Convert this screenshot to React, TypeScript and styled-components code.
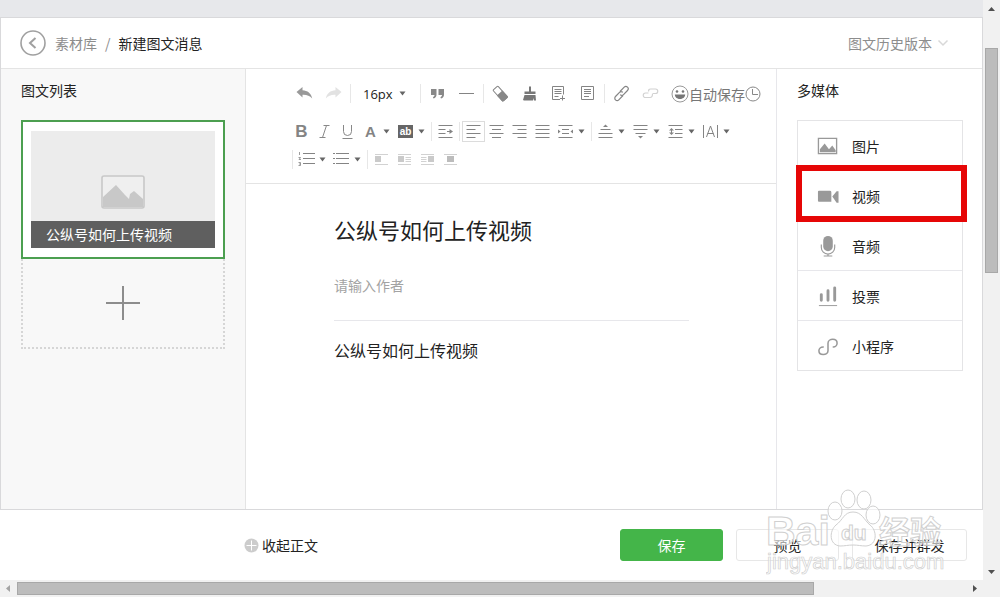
import React from "react";
import styled, { createGlobalStyle, css } from "styled-components";

const GlobalStyle = createGlobalStyle`
  *, *::before, *::after { box-sizing: border-box; }
  body {
    margin: 0;
    background: #fff;
    color: #222;
    font: 14px/20px "Noto Sans CJK SC", "Liberation Sans", sans-serif;
  }
  button, input, select, textarea { font: inherit; color: inherit; }
  button { padding: 0; border: 0; background: none; cursor: pointer; }
  h1, h2, p, ul { margin: 0; padding: 0; font-weight: 400; font-size: inherit; }
  ul { list-style: none; }
  svg { display: block; flex: none; }
`;

const Window = styled.div`
  display: grid;
  grid-template-columns: minmax(0, 1fr) 17px;
  grid-template-rows: minmax(0, 1fr) 17px;
  height: 100vh;
  background: #f1f1f1;
`;

const Page = styled.div`
  display: flex;
  flex-direction: column;
  background: #fff;
  overflow: hidden;
`;

const TopStrip = styled.div`
  flex: none;
  height: 17px;
  background: #e7e8eb;
`;

const Frame = styled.div`
  flex: 1;
  min-height: 0;
  display: flex;
  flex-direction: column;
  border: 1px solid #d9d9db;
`;

const Header = styled.header`
  flex: none;
  display: flex;
  align-items: center;
  height: 51px;
  padding: 0 33px 0 19px;
  border-bottom: 1px solid #e4e4e4;
`;

const BackButton = styled.button`
  margin-right: 9px;
`;

const Crumbs = styled.nav`
  display: flex;
  align-items: center;
  gap: 8px;
  color: #8d8d8d;
`;

const CrumbLink = styled.a`
  color: #8d8d8d;
  text-decoration: none;
`;

const PageTitle = styled.h1`
  color: #222;
`;

const HistoryButton = styled.button`
  display: flex;
  align-items: center;
  gap: 5px;
  margin-left: auto;
  color: #8d8d8d;
`;

const Columns = styled.main`
  flex: 1;
  min-height: 0;
  display: grid;
  grid-template-columns: 245px minmax(0, 1fr) 206px;
`;

const Side = styled.aside<{ $left?: boolean }>`
  padding: 11px 20px 0;
  ${(p) =>
    p.$left
      ? css`
          background: #f8f8f8;
          border-right: 1px solid #e4e4e4;
        `
      : css`
          padding-right: 19px;
          border-left: 1px solid #e7e7eb;
        `}
`;

const SideTitle = styled.h2`
  margin-bottom: 20px;
`;

const Card = styled.button`
  display: block;
  width: 100%;
  padding: 9px 8px;
  border: 2px solid #4c9f50;
  background: #fff;
`;

const Cover = styled.span`
  display: flex;
  flex-direction: column;
  align-items: center;
  justify-content: flex-end;
  gap: 12px;
  height: 117px;
  background: #ececec;
`;

const Caption = styled.span`
  width: 100%;
  padding: 0 15px;
  background: #5f5f5f;
  color: #fff;
  line-height: 27px;
  text-align: left;
`;

const AddButton = styled.button`
  display: flex;
  align-items: center;
  justify-content: center;
  width: 100%;
  height: 90px;
  border: 2px dotted #d6d6d6;
  border-top: 0;
`;

const Editor = styled.section`
  min-width: 0;
`;

const Toolbar = styled.div`
  padding: 11px 0 10px 44px;
  border-bottom: 1px solid #e4e4e4;
  color: #777;
`;

const ToolRow = styled.div<{ $spaced?: boolean }>`
  display: flex;
  align-items: center;
  height: 27px;
  margin-bottom: ${(p) => (p.$spaced ? 11 : 0)}px;
  & + &:last-child { margin-top: 1px; }
`;

const Tool = styled.button<{ $wide?: boolean; $active?: boolean }>`
  display: flex;
  flex: none;
  align-items: center;
  justify-content: center;
  width: ${(p) => (p.$wide ? 29 : 23)}px;
  height: 21px;
  color: #848484;
  ${(p) => p.$active && css`outline: 1px solid #dcdcdc; outline-offset: -1px;`}
`;

const DropTool = styled.button`
  display: flex;
  flex: none;
  align-items: center;
  gap: 4px;
  width: 35px;
  height: 21px;
  padding-left: 3px;
  color: #848484;
`;

const Divider = styled.span`
  flex: none;
  width: 1px;
  height: 19px;
  margin: 0 2px;
  background: #e7e7e7;
`;

const SizePicker = styled.label`
  display: grid;
  grid-template-columns: 1fr auto;
  align-items: center;
  width: 65px;
  padding: 0 12px 0 10px;
  color: #222;
`;

const SizeSelect = styled.select`
  appearance: none;
  width: 100%;
  padding: 0;
  border: 0;
  background: none;
  font: 13px/20px "Open Sans", sans-serif;
`;

const EmojiTool = styled.button`
  width: 24px;
  padding-left: 6px;
  color: #777;
`;

const SaveState = styled.span`
  display: flex;
  align-items: center;
  flex: none;
  color: #777;
`;

const Article = styled.div`
  display: flex;
  flex-direction: column;
  padding: 29px 87px 0 88px;
`;

const TitleInput = styled.input`
  width: 100%;
  height: 32px;
  padding: 0;
  border: 0;
  outline: 0;
  background: none;
  font-size: 22px;
`;

const AuthorInput = styled.input`
  width: 100%;
  height: 68px;
  margin: 6px 0 1px;
  padding: 0;
  border: 0;
  outline: 0;
  background: none;
  &::placeholder { color: #a3a3a3; opacity: 1; }
`;

const ContentArea = styled.textarea`
  width: 100%;
  height: 120px;
  padding: 17px 0 0;
  border: 0;
  border-top: 1px solid #e7e7eb;
  outline: 0;
  resize: none;
  background: none;
  font-size: 16px;
  line-height: 24px;
`;

const MediaList = styled.ul`
  border: 1px solid #e4e4e6;
`;

const MediaItem = styled.li<{ $marked?: boolean }>`
  position: relative;
  height: 50px;
  &:first-child { height: 49px; }
  & + & { border-top: 1px solid #e7e7eb; }
  ${(p) =>
    p.$marked &&
    css`
      z-index: 1;
      &::after {
        content: "";
        position: absolute;
        inset: -6px -5px -2px -2px;
        border: 6px solid #e60606;
        pointer-events: none;
      }
    `}
`;

const MediaButton = styled.button`
  display: flex;
  align-items: center;
  gap: 13px;
  width: 100%;
  height: 100%;
  padding-left: 19px;
  text-align: left;
`;

const Footer = styled.footer`
  position: relative;
  flex: none;
  display: flex;
  align-items: center;
  gap: 13px;
  height: 70px;
  padding: 0 16px 0 244px;
`;

const CollapseButton = styled.button`
  display: flex;
  align-items: center;
  gap: 3px;
  margin-right: auto;
`;

const Action = styled.button<{ $primary?: boolean; $long?: boolean }>`
  width: ${(p) => (p.$long ? 115 : 103)}px;
  height: 32px;
  border: 1px solid ${(p) => (p.$primary ? "#44b549" : "#e7e7e7")};
  border-radius: 3px;
  background: ${(p) => (p.$primary ? "#44b549" : "#fff")};
  color: ${(p) => (p.$primary ? "#fff" : "#222")};
`;

const Watermark = styled.svg`
  position: absolute;
  right: 33px;
  bottom: 0;
  pointer-events: none;
`;

const Scrollbar = styled.div<{ $horizontal?: boolean }>`
  display: flex;
  flex-direction: ${(p) => (p.$horizontal ? "row" : "column")};
  justify-content: space-between;
  align-items: center;
  background: #f1f1f1;
`;

const Track = styled.div<{ $horizontal?: boolean }>`
  flex: 1;
  display: grid;
  ${(p) =>
    p.$horizontal
      ? css`
          grid-template-columns: 84fr 16fr;
          height: 13px;
        `
      : css`
          grid-template-rows: 31fr 225fr 290fr;
          width: 13px;
        `}
`;

const Thumb = styled.div<{ $second?: boolean }>`
  ${(p) => p.$second && css`grid-row: 2;`}
  background: #bcbcbc;
  border: 1px solid #a8a8a8;
`;

const ArrowIcon = ({ d, faint }: { d: string; faint?: boolean }) => (
  <svg width="17" height="17" viewBox="0 0 17 17">
    <path d={d} fill={faint ? "#a3a3a3" : "#505050"} />
  </svg>
);

const Caret = () => (
  <svg width="7" height="5" viewBox="0 0 7 5">
    <path d="M0.5 0.5h6L3.5 4.5z" fill="#666" />
  </svg>
);

const Icon = ({ children, color = "currentColor" }: { children: React.ReactNode; color?: string }) => (
  <svg width="17" height="17" viewBox="0 0 17 17" fill="none" stroke={color} aria-hidden="true">
    {children}
  </svg>
);

const PALE = "#d2d2d2";

const icons = {
  undo: (
    <Icon>
      <path d="M0.5 7 6.5 2v3.2c5 .3 8.700 3 9.700 8.300-2.500-3-5.500-4-9.700-3.800V12.500z" fill="#999" stroke="none" />
    </Icon>
  ),
  redo: (
    <Icon>
      <path d="M16.500 7 10.500 2v3.200c-5 .3-8.700 3-9.700 8.300 2.500-3 5.500-4 9.700-3.800V12.500z" fill="#e2e2e2" stroke="none" />
    </Icon>
  ),
  quote: (
    <Icon>
      <path d="M2 4h5.500v5.500c0 2-1 3.500-3 4l-.6-1.300c1-.4 1.600-1.200 1.600-2.200H2zM9.500 4H15v5.500c0 2-1 3.500-3 4l-.6-1.300c1-.4 1.600-1.200 1.600-2.200H9.500z" fill="#888" stroke="none" />
    </Icon>
  ),
  rule: (
    <Icon>
      <path d="M1 8.500h15" />
    </Icon>
  ),
  eraser: (
    <Icon>
      <g transform="rotate(48 8.500 8.500)">
        <rect x="1" y="5.500" width="15" height="6.500" rx="1" />
        <path d="M7.500 5h7.500a1.500 1.500 0 0 1 1.500 1.500v4.500a1.500 1.500 0 0 1-1.500 1.500H7.500z" fill="#888" stroke="none" />
      </g>
    </Icon>
  ),
  brush: (
    <Icon>
      <path d="M8 1.500h2v5h4.500V9h-11V6.500H8zM3.500 10h11l.5 5.500h-2l-.5-2.500-.5 2.500H3L2 15z" fill="#777" stroke="none" />
    </Icon>
  ),
  docAdd: (
    <Icon>
      <path d="M13.500 9.500v-8h-11v13H10M4.500 4.500h7M4.500 6.500h7M4.500 8.500h7M4.500 11.500h4M12.500 10.500v5M10 13.500h5" />
    </Icon>
  ),
  doc: (
    <Icon>
      <path d="M2.500 1.500h12v13h-12zM5 4.500h7M5 6.500h7M5 8.500h7M5 11.500h5" />
    </Icon>
  ),
  link: (
    <Icon>
      <path d="M7 6.500 11.200 2.200a2.300 2.300 0 0 1 3.300 3.300L10.500 9.700a2.300 2.300 0 0 1-3.300 0M10 10.500 5.800 14.800a2.300 2.300 0 0 1-3.300-3.300L6.500 7.300a2.300 2.300 0 0 1 3.300 0" strokeWidth="1.200" />
    </Icon>
  ),
  unlink: (
    <Icon color={PALE}>
      <path d="M6.500 6.500c0-2 .8-2.500 2-2.500h5c3 0 3 4.500 0 4.500h-3M10.500 9c0 2.500-1 3.500-2.500 3.500H3.500c-3 0-3-4.500 0-4.500h3" strokeWidth="1.200" />
    </Icon>
  ),
  italic: (
    <Icon color="#888">
      <path d="M7.500 2.500h6M3.500 14.500h6M10.500 2.500 6.500 14.500" />
    </Icon>
  ),
  underline: (
    <Icon color="#888">
      <path d="M4.500 2v6.500a4 4 0 0 0 8 0V2M3.500 15.500h10" />
    </Icon>
  ),
  indent: (
    <Icon>
      <path d="M1.500 2.500h14M1.500 6.500h7M1.500 10.500h7M1.500 14.500h14M10 8.500h5" />
      <path d="M12.500 6v5l3.500-2.500z" fill="currentColor" stroke="none" />
    </Icon>
  ),
  left: (
    <Icon>
      <path d="M1.500 2.500h14M1.500 6.500h9M1.500 10.500h14M1.500 14.500h9" />
    </Icon>
  ),
  center: (
    <Icon>
      <path d="M1.500 2.500h14M4 6.500h9M1.500 10.500h14M4 14.500h9" />
    </Icon>
  ),
  right: (
    <Icon>
      <path d="M1.500 2.500h14M6.500 6.500h9M1.500 10.500h14M6.500 14.500h9" />
    </Icon>
  ),
  justify: (
    <Icon>
      <path d="M1.500 2.500h14M1.500 6.500h14M1.500 10.500h14M1.500 14.500h14" />
    </Icon>
  ),
  sideSpace: (
    <Icon>
      <path d="M1.500 2.500h14M5 6.500h7M5 10.500h7M1.500 14.500h14" />
      <path d="M1 6.500v4l2.500-2zM16 6.500v4l-2.500-2z" fill="currentColor" stroke="none" />
    </Icon>
  ),
  spaceTop: (
    <Icon>
      <path d="M3.500 6.500h10M1.500 10.500h14M1.500 14.500h14" />
      <path d="M6 4h5L8.500 1.500z" fill="currentColor" stroke="none" />
    </Icon>
  ),
  spaceBottom: (
    <Icon>
      <path d="M1.500 2.500h14M1.500 6.500h14M3.500 10.500h10" />
      <path d="M6 13h5l-2.500 2.500z" fill="currentColor" stroke="none" />
    </Icon>
  ),
  lineHeight: (
    <Icon>
      <path d="M1.500 2.500h14M8 6.500h7.500M8 10.500h7.500M1.500 14.500h14M4.500 6v5" />
      <path d="M2 7.500h5L4.500 5zM2 9.500h5L4.500 12z" fill="currentColor" stroke="none" />
    </Icon>
  ),
  letterSpace: (
    <Icon>
      <path d="M1.500 2v13M15.500 2v13M4.500 14 8.500 3l4 11M5.500 10.500h6" />
    </Icon>
  ),
  ordered: (
    <Icon>
      <path d="M5 2.500h12M5 7.500h12M5 12.500h12" />
      <path d="M1.500 1v3M.5 6.500h2L1 8.500h2M.5 11.500h2v3h-2M1 13h1.500" strokeWidth="0.800" />
    </Icon>
  ),
  bullets: (
    <Icon>
      <path d="M3 2.500h13M3 7.500h13M3 12.500h13M0 2.500h2M0 7.500h2M0 12.500h2" />
    </Icon>
  ),
  floatNone: (
    <Icon color={PALE}>
      <path d="M2 3.500h13M2 13.500h13" />
      <path d="M2 5h6v6H2z" fill="#cacaca" stroke="none" />
    </Icon>
  ),
  floatLeft: (
    <Icon color={PALE}>
      <path d="M2 3.500h13M9.500 6.500h5.500M9.500 8.500h5.500M9.500 10.500h5.500M2 13.500h13" />
      <path d="M2 5h6v6H2z" fill="#cacaca" stroke="none" />
    </Icon>
  ),
  floatRight: (
    <Icon color={PALE}>
      <path d="M2 3.500h13M2 6.500h5.500M2 8.500h5.500M2 10.500h5.500M2 13.500h13" />
      <path d="M9 5h6v6H9z" fill="#cacaca" stroke="none" />
    </Icon>
  ),
  floatCenter: (
    <Icon color={PALE}>
      <path d="M2 3.500h13M2 13.500h13" />
      <path d="M5 5h7v6H5z" fill="#bcbcbc" stroke="none" />
    </Icon>
  ),
};

const Glyph = styled.span<{ $size: number }>`
  width: 17px;
  text-align: center;
  font: 700 ${(p) => p.$size}px/20px "Liberation Sans", sans-serif;
`;

const Swatch = styled.span`
  width: 15px;
  margin: 0 1px;
  background: #666;
  color: #fff;
  font: 700 10px/13px "Liberation Sans", sans-serif;
  text-align: center;
`;

const Drop = ({ label, children }: { label: string; children: React.ReactNode }) => (
  <DropTool type="button" aria-label={label}>
    {children}
    <Caret />
  </DropTool>
);

const mediaIcons = {
  image: (
    <>
      <path d="M1.500 2.500h19v16h-19z" fill="none" stroke="#999" strokeWidth="1.400" />
      <path d="M3 17v-3l5-6 4.500 6 3.500-4 3.500 5v2z" fill="#999" />
    </>
  ),
  video: <path d="M2 5h11.500a1.500 1.500 0 0 1 1.500 1.500v10H2a1 1 0 0 1-1-1V6a1 1 0 0 1 1-1zM16 11l4.500-5.500H22.500v12H20.500z" fill="#999" />,
  audio: (
    <>
      <rect x="6.500" y="0" width="10" height="16" rx="5" fill="#999" />
      <path d="M4.500 9v3a7 7 0 0 0 14 0V9M11.500 18.500v2M7 21h9" fill="none" stroke="#999" strokeWidth="1.200" />
    </>
  ),
  vote: (
    <>
      <path d="M4.500 9v6M11.500 5v10M18.500 2v13" stroke="#999" strokeWidth="3" strokeLinecap="round" />
      <path d="M2 20.500h19" stroke="#999" />
    </>
  ),
  mini: (
    <path
      d="M6.500 11.500c-2.500 0-4.500 1.500-4.500 4s2 4 4.500 4 5-1.500 5-4v-8c0-2.500 2.500-4 5-4s4.500 1.500 4.500 4-2 4-4 4"
      fill="none"
      stroke="#999"
      strokeWidth="1.600"
      strokeLinecap="round"
    />
  ),
};

const media: { icon: keyof typeof mediaIcons; label: string; marked?: boolean }[] = [
  { icon: "image", label: "图片" },
  { icon: "video", label: "视频", marked: true },
  { icon: "audio", label: "音频" },
  { icon: "vote", label: "投票" },
  { icon: "mini", label: "小程序" },
];

const EditorToolbar = () => (
  <Toolbar role="toolbar" aria-label="编辑">
    <ToolRow $spaced>
      <Tool $wide aria-label="撤销">{icons.undo}</Tool>
      <Tool $wide aria-label="重做">{icons.redo}</Tool>
      <Divider />
      <SizePicker>
        <SizeSelect aria-label="字号" defaultValue="16px">
          <option>16px</option>
        </SizeSelect>
        <Caret />
      </SizePicker>
      <Divider />
      <Tool $wide aria-label="引用">{icons.quote}</Tool>
      <Tool $wide aria-label="分割线">{icons.rule}</Tool>
      <Divider />
      <Tool $wide aria-label="清除格式">{icons.eraser}</Tool>
      <Tool $wide aria-label="格式刷">{icons.brush}</Tool>
      <Tool $wide aria-label="插入模板">{icons.docAdd}</Tool>
      <Tool $wide aria-label="自动排版">{icons.doc}</Tool>
      <Divider />
      <Tool $wide aria-label="超链接">{icons.link}</Tool>
      <Tool $wide aria-label="取消超链接">{icons.unlink}</Tool>
      <EmojiTool aria-label="表情">
        <svg width="18" height="18" viewBox="0 0 18 18">
          <circle cx="9" cy="9" r="8" fill="none" stroke="#999" />
          <circle cx="6" cy="6.500" r="1.300" fill="#777" />
          <circle cx="12" cy="6.500" r="1.300" fill="#777" />
          <path d="M3.800 9.500h10.400c-.3 6-10.100 6-10.400 0z" fill="#777" />
        </svg>
      </EmojiTool>
      <SaveState>
        自动保存
        <svg width="16" height="16" viewBox="0 0 16 16" fill="none" stroke="#888">
          <circle cx="8" cy="8" r="7" />
          <path d="M7.500 3v5.500H13" />
        </svg>
      </SaveState>
    </ToolRow>
    <ToolRow>
      <Tool aria-label="加粗"><Glyph $size={17}>B</Glyph></Tool>
      <Tool aria-label="斜体">{icons.italic}</Tool>
      <Tool aria-label="下划线">{icons.underline}</Tool>
      <Drop label="字体颜色"><Glyph $size={15}>A</Glyph></Drop>
      <Drop label="背景色"><Swatch>ab</Swatch></Drop>
      <Divider />
      <Tool aria-label="首行缩进">{icons.indent}</Tool>
      <Divider />
      <Tool $active aria-label="左对齐">{icons.left}</Tool>
      <Tool aria-label="居中">{icons.center}</Tool>
      <Tool aria-label="右对齐">{icons.right}</Tool>
      <Tool aria-label="两端对齐">{icons.justify}</Tool>
      <Drop label="两端缩进">{icons.sideSpace}</Drop>
      <Divider />
      <Drop label="段前距">{icons.spaceTop}</Drop>
      <Drop label="段后距">{icons.spaceBottom}</Drop>
      <Drop label="行间距">{icons.lineHeight}</Drop>
      <Drop label="字间距">{icons.letterSpace}</Drop>
    </ToolRow>
    <ToolRow>
      <Divider />
      <Drop label="有序列表">{icons.ordered}</Drop>
      <Drop label="无序列表">{icons.bullets}</Drop>
      <Divider />
      <Tool aria-label="默认">{icons.floatNone}</Tool>
      <Tool aria-label="左浮动">{icons.floatLeft}</Tool>
      <Tool aria-label="右浮动">{icons.floatRight}</Tool>
      <Tool aria-label="图片居中">{icons.floatCenter}</Tool>
    </ToolRow>
  </Toolbar>
);

const BaiduMark = () => (
  <Watermark
    width="184"
    height="92"
    viewBox="0 0 184 92"
    fill="#fff"
    fillOpacity="0.600"
    stroke="#d0d0d0"
    strokeWidth="1"
    fontFamily='"Liberation Sans", sans-serif'
  >
    <text x="0" y="57" fontSize="41" fontWeight="700">Bai</text>
    <ellipse cx="69" cy="23" rx="7" ry="9" />
    <ellipse cx="82" cy="11" rx="7" ry="9" />
    <ellipse cx="98" cy="12" rx="7" ry="9" />
    <ellipse cx="107" cy="27" rx="7" ry="9" />
    <path d="M87 24c9 0 11 8 17 13 7 5 8 20-4 21-5 0-8-1-13-1s-8 1-13 1c-11-1-11-15-4-21 7-5 8-13 17-13z" />
    <text x="75" y="52" fontSize="21" fontWeight="700">du</text>
    <text x="113" y="55" fontSize="31" fontWeight="700" fontFamily='"Noto Sans CJK SC", sans-serif'>经验</text>
    <text x="1" y="81" fontSize="22" strokeWidth="0.700">jingyan.baidu.com</text>
  </Watermark>
);

export default function App() {
  return (
    <Window>
      <GlobalStyle />
      <Page>
        <TopStrip />
        <Frame>
          <Header>
            <BackButton type="button" aria-label="返回">
              <svg width="26" height="26" viewBox="0 0 26 26" fill="none" stroke="#a0a0a0">
                <circle cx="13" cy="13" r="12" strokeWidth="1.600" />
                <path d="M15.500 8 10 13l5.500 5" strokeWidth="2" />
              </svg>
            </BackButton>
            <Crumbs>
              <CrumbLink href="#library">素材库</CrumbLink>
              <span>/</span>
              <PageTitle>新建图文消息</PageTitle>
            </Crumbs>
            <HistoryButton type="button">
              图文历史版本
              <svg width="12" height="8" viewBox="0 0 12 8" fill="none" stroke="#d8d8d8" strokeWidth="1.500">
                <path d="M1.500 1.500 6 6l4.500-4.500" />
              </svg>
            </HistoryButton>
          </Header>
          <Columns>
            <Side $left>
              <SideTitle>图文列表</SideTitle>
              <Card type="button">
                <Cover>
                  <svg width="44" height="34" viewBox="0 0 44 34">
                    <rect x="1" y="1" width="42" height="32" rx="2" fill="#efefef" stroke="#c8c8c8" strokeWidth="1.600" />
                    <path d="M2 32V22L15 10l9 10 4 4 1-5 4-3 9 8v8z" fill="#c8c8c8" />
                  </svg>
                  <Caption>公纵号如何上传视频</Caption>
                </Cover>
              </Card>
              <AddButton type="button" aria-label="新建消息">
                <svg width="34" height="34" viewBox="0 0 34 34" stroke="#8d8d8d" strokeWidth="2">
                  <path d="M0 17h34M17 0v34" />
                </svg>
              </AddButton>
            </Side>
            <Editor>
              <EditorToolbar />
              <Article>
                <TitleInput aria-label="标题" defaultValue="公纵号如何上传视频" />
                <AuthorInput aria-label="作者" placeholder="请输入作者" />
                <ContentArea aria-label="正文" defaultValue="公纵号如何上传视频" />
              </Article>
            </Editor>
            <Side>
              <SideTitle>多媒体</SideTitle>
              <MediaList>
                {media.map((m) => (
                  <MediaItem key={m.icon} $marked={m.marked}>
                    <MediaButton type="button">
                      <svg width="22" height="22" viewBox="0 -1 23 23">
                        {mediaIcons[m.icon]}
                      </svg>
                      {m.label}
                    </MediaButton>
                  </MediaItem>
                ))}
              </MediaList>
            </Side>
          </Columns>
        </Frame>
        <Footer>
          <CollapseButton type="button">
            <svg width="15" height="15" viewBox="0 0 15 15">
              <circle cx="7.500" cy="7.500" r="7" fill="#ccc" />
              <path d="M2.500 7.500h10M7.500 2.500v10" stroke="#fff" />
            </svg>
            收起正文
          </CollapseButton>
          <Action type="button" $primary>保存</Action>
          <Action type="button">预览</Action>
          <Action type="button" $long>保存并群发</Action>
          <BaiduMark />
        </Footer>
      </Page>
      <Scrollbar>
        <ArrowIcon d="M5 11h7L8.500 7z" />
        <Track>
          <Thumb $second />
        </Track>
        <ArrowIcon d="M5 7h7L8.500 11z" />
      </Scrollbar>
      <Scrollbar $horizontal>
        <ArrowIcon d="M10 5v7L6 8.500z" faint />
        <Track $horizontal>
          <Thumb />
        </Track>
        <ArrowIcon d="M7 5v7l4-3.500z" />
      </Scrollbar>
    </Window>
  );
}
